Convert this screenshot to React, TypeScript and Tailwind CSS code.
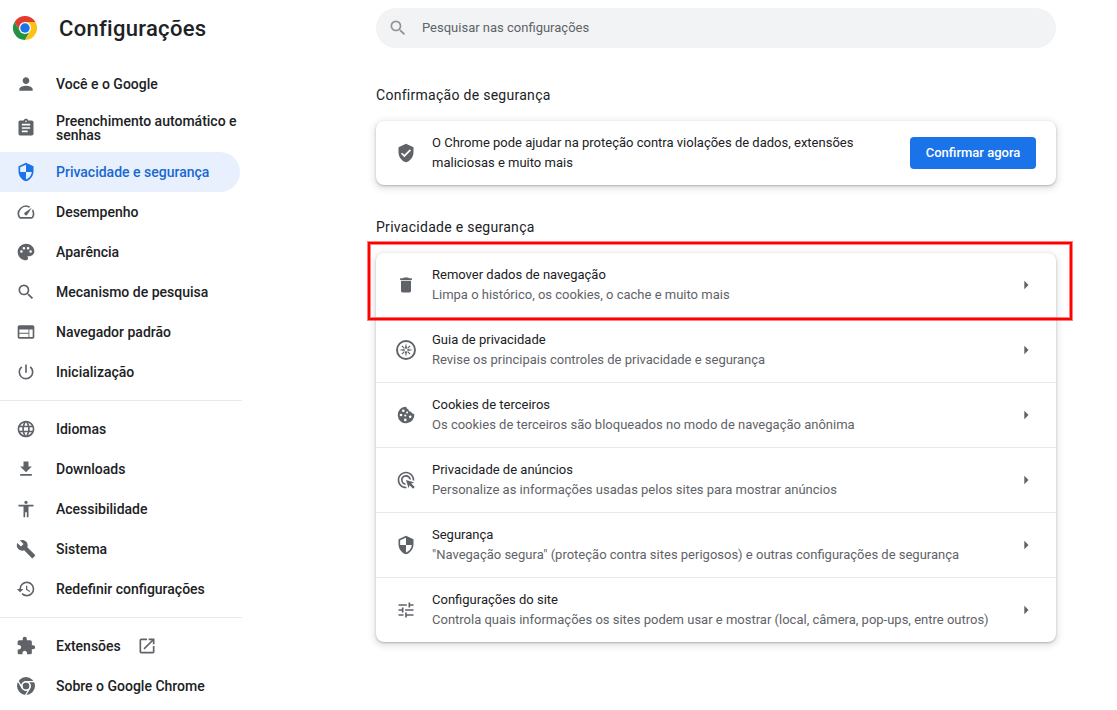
import type { ReactNode } from "react";
import type { IconType } from "react-icons";
import {
  MdAccessibility,
  MdAdsClick,
  MdArrowRight,
  MdAssignment,
  MdBuild,
  MdDelete,
  MdExtension,
  MdFileDownload,
  MdLanguage,
  MdOpenInNew,
  MdPalette,
  MdPerson,
  MdPowerSettingsNew,
  MdRestore,
  MdSearch,
  MdSecurity,
  MdTune,
  MdVerifiedUser,
  MdWeb,
} from "react-icons/md";

type IconProps = { className?: string };

function ChromeLogo() {
  return (
    <svg viewBox="0 0 48 48" className="size-6 shrink-0">
      <path fill="#e33b2e" d="M3.2 12A24 24 0 0 1 44.8 12H24L13.6 30Z" />
      <path fill="#229342" d="M3.2 12A24 24 0 0 0 24 48L34.4 30 24 24 13.6 30Z" />
      <path fill="#fbc116" d="M44.8 12A24 24 0 0 1 24 48L34.4 30 24 12Z" />
      <circle cx="24" cy="24" r="12" fill="#fff" />
      <circle cx="24" cy="24" r="9.5" fill="#1a73e8" />
    </svg>
  );
}

function ChromeMono({ className }: IconProps) {
  return (
    <svg viewBox="0 0 20 20" className={className} fill="none" stroke="currentColor">
      <circle cx="10" cy="10" r="3.5" fill="currentColor" stroke="none" />
      <circle cx="10" cy="10" r="6.8" strokeWidth="4.4" />
      <circle cx="10" cy="10" r="4.3" stroke="#fff" strokeWidth="1.3" />
      <path stroke="#fff" strokeWidth="1.3" d="M10 5.7h8.5M6.28 12.15 2 4.8M13.72 12.15 9.4 19.5" />
    </svg>
  );
}

function Gauge({ className }: IconProps) {
  return (
    <svg viewBox="0 0 24 24" className={className} fill="currentColor">
      <path d="m20.38 8.57-1.23 1.85a8 8 0 0 1-.22 7.58H5.07A8 8 0 0 1 15.58 6.85l1.85-1.23A10 10 0 0 0 3.35 19a2 2 0 0 0 1.72 1h13.85a2 2 0 0 0 1.74-1 10 10 0 0 0-.27-10.44zm-9.79 6.84a2 2 0 0 0 2.83 0l5.66-8.49-8.49 5.66a2 2 0 0 0 0 2.83z" />
    </svg>
  );
}

function Compass({ className }: IconProps) {
  return (
    <svg viewBox="0 0 20 20" className={className} fill="none" stroke="currentColor">
      <circle cx="10" cy="10" r="9" strokeWidth="1.9" />
      <path
        fill="currentColor"
        stroke="none"
        d="m10 3 1.1 5.2L10 9 8.9 8.2ZM17 10l-5.2 1.1L11 10l.8-1.1ZM10 17l-1.1-5.2L10 11l1.1.8ZM3 10l5.2-1.1L9 10l-.8 1.1Z"
      />
      <path
        strokeWidth="1.2"
        d="m5.9 5.9 2.5 2.5m3.2 3.2 2.5 2.5m0-8.2-2.5 2.5m-3.2 3.2-2.5 2.5"
      />
    </svg>
  );
}

function Cookie({ className }: IconProps) {
  return (
    <svg viewBox="0 0 20 20" className={className} fill="currentColor">
      <path d="M10.3 1.7A8.3 8.3 0 1 0 18.3 9c-1.5.1-2.8-.8-3-2.2-1.7.2-3-.9-2.9-2.5-1.200-.3-2-1.300-2.100-2.600Z" />
      <g fill="#fff">
        <circle cx="7.300" cy="5.700" r="1.300" />
        <circle cx="5" cy="10" r="1.300" />
        <circle cx="11.100" cy="7.500" r="1" />
        <circle cx="9.300" cy="10.500" r="1.100" />
        <circle cx="14.200" cy="11.700" r="1.300" />
        <circle cx="9.300" cy="14.900" r="1.300" />
      </g>
    </svg>
  );
}

type Icon = IconType | ((props: IconProps) => ReactNode);

type NavItem = { label: string; icon: Icon; active?: boolean; external?: boolean };

const navGroups: NavItem[][] = [
  [
    { label: "Você e o Google", icon: MdPerson },
    { label: "Preenchimento automático e senhas", icon: MdAssignment },
    { label: "Privacidade e segurança", icon: MdSecurity, active: true },
    { label: "Desempenho", icon: Gauge },
    { label: "Aparência", icon: MdPalette },
    { label: "Mecanismo de pesquisa", icon: MdSearch },
    { label: "Navegador padrão", icon: MdWeb },
    { label: "Inicialização", icon: MdPowerSettingsNew },
  ],
  [
    { label: "Idiomas", icon: MdLanguage },
    { label: "Downloads", icon: MdFileDownload },
    { label: "Acessibilidade", icon: MdAccessibility },
    { label: "Sistema", icon: MdBuild },
    { label: "Redefinir configurações", icon: MdRestore },
  ],
  [
    { label: "Extensões", icon: MdExtension, external: true },
    { label: "Sobre o Google Chrome", icon: ChromeMono },
  ],
];

const rows: { title: string; detail: string; icon: Icon }[] = [
  {
    title: "Remover dados de navegação",
    detail: "Limpa o histórico, os cookies, o cache e muito mais",
    icon: MdDelete,
  },
  {
    title: "Guia de privacidade",
    detail: "Revise os principais controles de privacidade e segurança",
    icon: Compass,
  },
  {
    title: "Cookies de terceiros",
    detail: "Os cookies de terceiros são bloqueados no modo de navegação anônima",
    icon: Cookie,
  },
  {
    title: "Privacidade de anúncios",
    detail: "Personalize as informações usadas pelos sites para mostrar anúncios",
    icon: MdAdsClick,
  },
  {
    title: "Segurança",
    detail: '"Navegação segura" (proteção contra sites perigosos) e outras configurações de segurança',
    icon: MdSecurity,
  },
  {
    title: "Configurações do site",
    detail: "Controla quais informações os sites podem usar e mostrar (local, câmera, pop-ups, entre outros)",
    icon: MdTune,
  },
];

function NavLink({ item }: { item: NavItem }) {
  const Glyph = item.icon;
  return (
    <a
      className={
        "flex min-h-10 w-60 items-center rounded-r-full py-2.5 pl-4 text-sm leading-[14px] font-medium " +
        (item.active ? "bg-[#e8f0fe] text-[#1967d2]" : "text-[#202124]")
      }
    >
      <Glyph className={"size-5 shrink-0 " + (item.active ? "text-[#1a73e8]" : "text-[#5f6368]")} />
      <span className="ml-5">{item.label}</span>
      {item.external && <MdOpenInNew className="ml-4 size-5 shrink-0 text-[#5f6368]" />}
    </a>
  );
}

function Sidebar() {
  return (
    <aside className="w-[242px] shrink-0">
      <header className="flex h-14 items-center pl-[13px]">
        <ChromeLogo />
        <h1 className="ml-[22px] text-[22px] font-medium tracking-[0.3px]">Configurações</h1>
      </header>
      <nav className="pt-2">
        {navGroups.map((group, i) => (
          <div key={group[0].label} className={i > 0 ? "mt-2 border-t border-[#e8eaed] pt-2" : ""}>
            {group.map((item) => (
              <NavLink key={item.label} item={item} />
            ))}
          </div>
        ))}
      </nav>
    </aside>
  );
}

function Card({ children }: { children: ReactNode }) {
  return (
    <div className="rounded-lg bg-white shadow-[0_1px_2px_0_rgba(60,64,67,0.3),0_2px_6px_2px_rgba(60,64,67,0.15)]">
      {children}
    </div>
  );
}

export default function App() {
  return (
    <div className="flex h-[710px] w-[1117px] overflow-hidden bg-white font-['Roboto',sans-serif] text-[#202124]">
      <Sidebar />
      <main className="ml-[134px] w-[680px] pt-2 text-[13px] leading-5">
        <div className="flex h-10 items-center rounded-full bg-[#f1f3f4] pl-3">
          <MdSearch className="size-5 text-[#909396]" />
          <span className="ml-3.5 text-[#5f6368]">Pesquisar nas configurações</span>
        </div>
        <h2 className="mt-[37px] mb-4 text-sm leading-5 tracking-[0.28px]">Confirmação de segurança</h2>
        <Card>
          <div className="flex h-16 items-center px-5">
            <MdVerifiedUser className="size-5 shrink-0 text-[#5f6368]" />
            <p className="ml-4 w-[440px]">
              O Chrome pode ajudar na proteção contra violações de dados, extensões maliciosas e muito mais
            </p>
            <button className="ml-auto h-8 w-[126px] rounded bg-[#1a73e8] font-medium text-white">
              Confirmar agora
            </button>
          </div>
        </Card>
        <h2 className="mt-8 mb-4 text-sm leading-5 tracking-[0.28px]">Privacidade e segurança</h2>
        <div className="relative">
          <Card>
            {rows.map(({ title, detail, icon: Glyph }, i) => (
              <div
                key={title}
                className={"flex items-center px-5 py-3 " + (i > 0 ? "border-t border-[#e8eaed]" : "")}
              >
                <Glyph className="size-5 shrink-0 text-[#5f6368]" />
                <div className="ml-4 grow">
                  <div>{title}</div>
                  <div className="text-[#5f6368]">{detail}</div>
                </div>
                <MdArrowRight className="size-5 shrink-0 text-[#5f6368]" />
              </div>
            ))}
          </Card>
          <div className="absolute -top-[11px] -left-2 h-[78px] w-[704px] border-2 border-[#ff0000] shadow-[0_0_0_1px_rgba(255,0,0,0.5),inset_0_0_0_1px_rgba(255,0,0,0.5)]" />
        </div>
      </main>
    </div>
  );
}
